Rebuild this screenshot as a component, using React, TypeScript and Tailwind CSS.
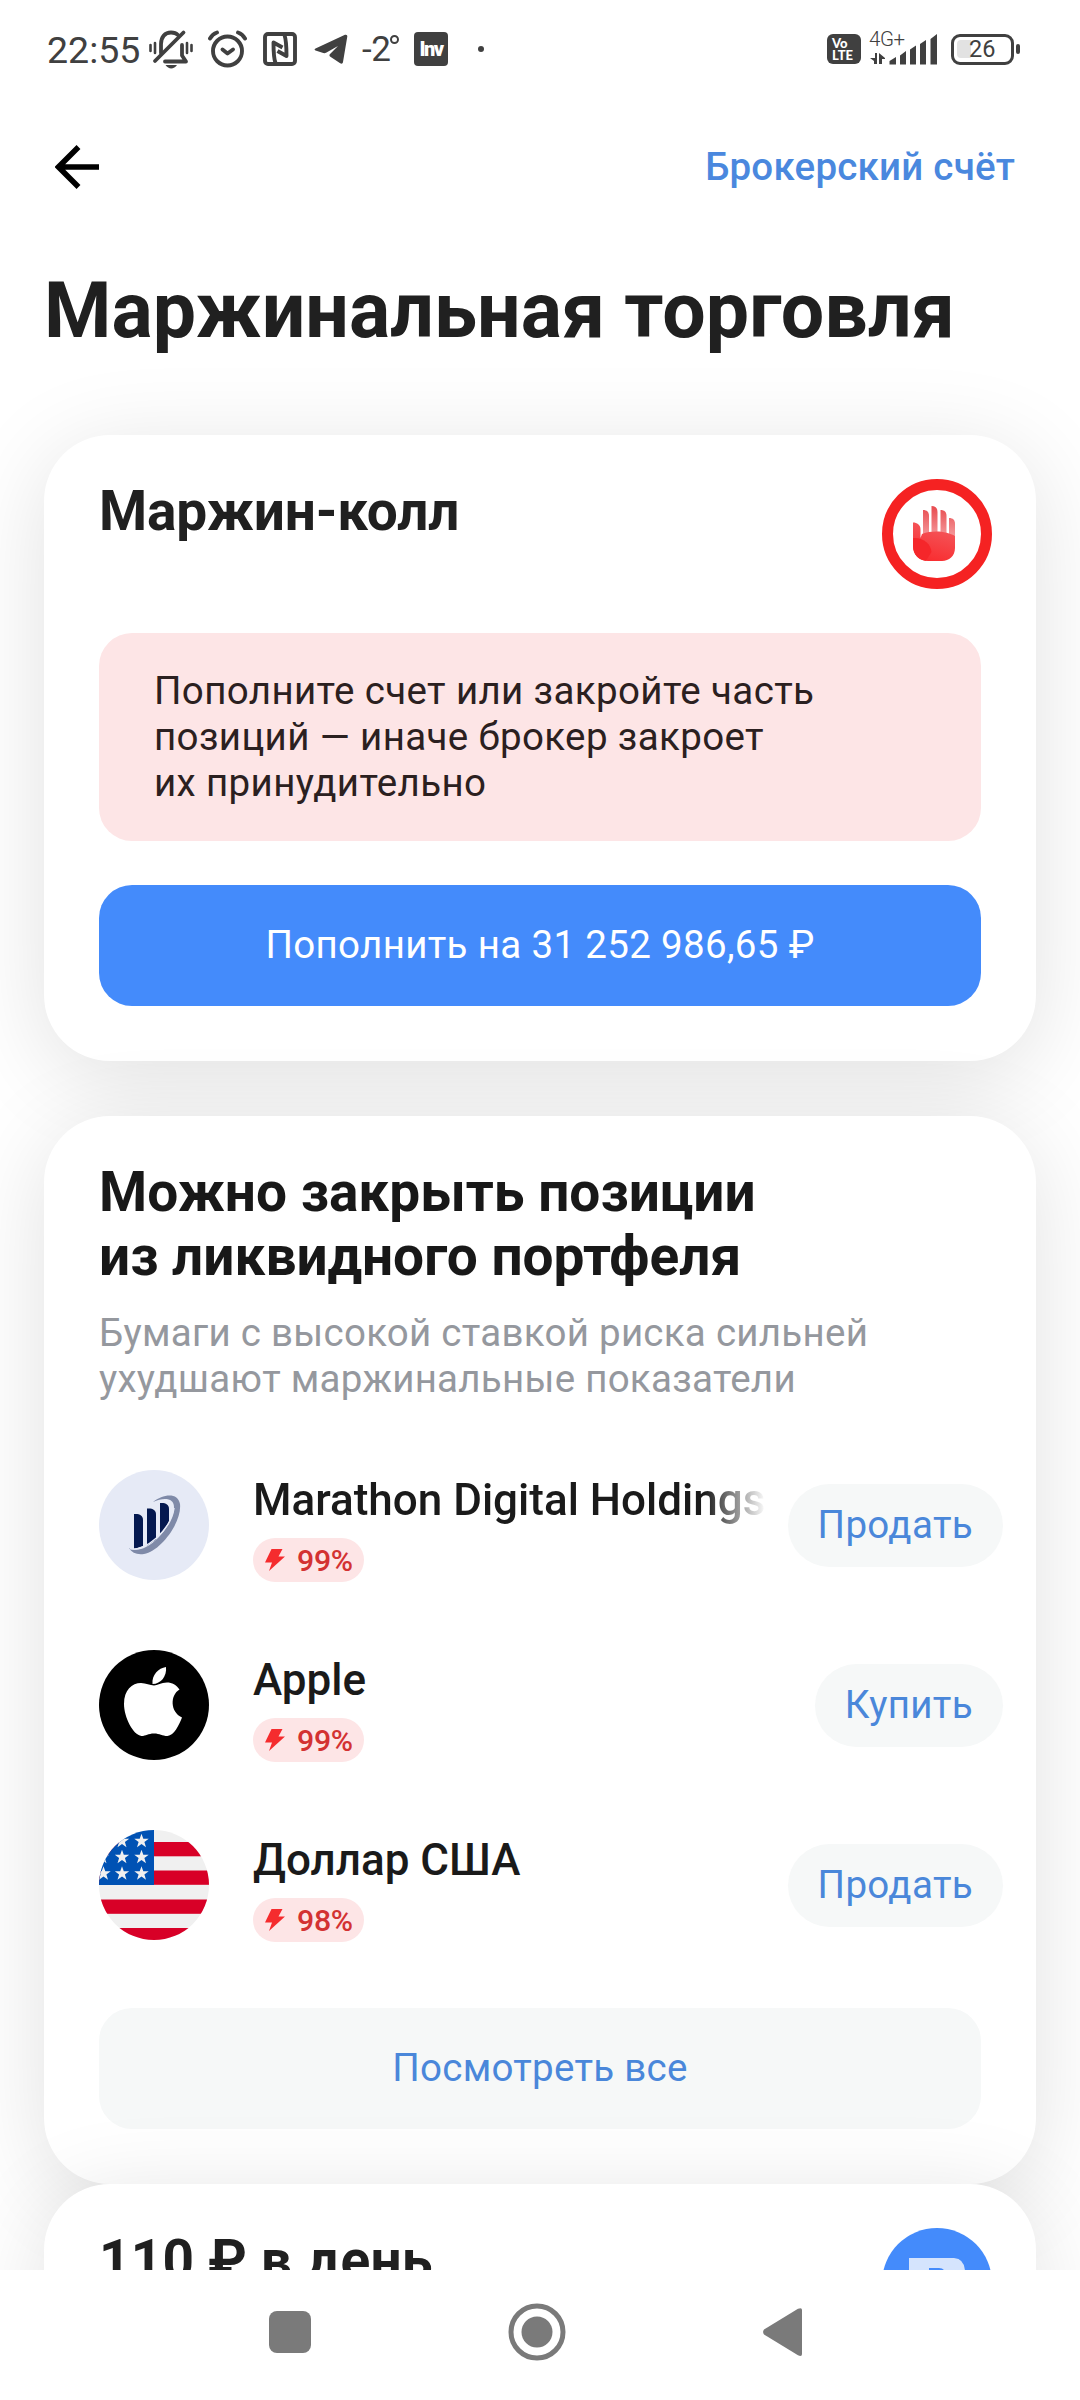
import React from 'react'

interface Position {
  name: string
  rate: string
  action: string
  logo: React.FC
}

const LOGO_SIZE = 'block h-[110px] w-[110px] shrink-0'

const MarathonLogo: React.FC = () => (
  <svg viewBox="0 0 110 110" className={LOGO_SIZE}>
    <circle cx="55" cy="55" r="55" fill="#e6eaf6" />
    <path d="M35 44c5-.5 9 1 9 6v26l-9 3z" fill="#04184f" />
    <path d="M48 38.500c5-.5 9 1 9 6v25l-9 6z" fill="#04184f" />
    <path d="M61 33c5-.5 9 1 9 6v12c-2 5-5 9-9 13z" fill="#04184f" />
    <path
      d="M54 32C64 24 79 22 81 34C83 52 62 81 45 84C38 85 33 83 30 78C36 81 41 80 47 77C61 70 75 50 75 37C75 28 65 27 54 32Z"
      fill="#7f8aa8"
    />
    <path d="M31 78.500C45 83 72 60 75 38" fill="none" stroke="#e6eaf6" strokeWidth="1.500" />
  </svg>
)

const AppleLogo: React.FC = () => (
  <svg viewBox="0 0 110 110" className={LOGO_SIZE}>
    <circle cx="55" cy="55" r="55" fill="#000" />
    <path
      d="M80.500 39.500C71 45 71 62 83 67.500C80 75 75 85.500 68.500 86C63 86 61 83.500 55 83.500C49 83.500 47 86 42.500 86C34 85 25 67 25 54C25 40 33 33 42 33C47 33 51 35.500 55 35.500C58.500 35.500 62 32.500 68 32.500C73 32.500 77.500 35 80.500 39.500Z"
      fill="#fff"
    />
    <path d="M67 17C68 26 62 34 53.500 34C52.500 25 59.500 18 67 17Z" fill="#fff" />
  </svg>
)

const STARS = [
  [4.500, 11], [23, 11], [42.500, 11],
  [3, 27], [23, 27], [42.500, 27],
  [4.500, 43.500], [23, 43.500], [42.500, 43.500],
]

const DollarLogo: React.FC = () => (
  <svg viewBox="0 0 110 110" className={LOGO_SIZE}>
    <clipPath id="flag">
      <circle cx="55" cy="55" r="55" />
    </clipPath>
    <g clipPath="url(#flag)">
      <rect width="110" height="110" fill="#f0f0f0" />
      {[12, 40.500, 69.500, 98].map((y) => (
        <rect key={y} y={y} width="110" height="14.300" fill="#d80027" />
      ))}
      <rect width="55" height="55" fill="#0052b4" />
      {STARS.map(([x, y]) => (
        <path
          key={`${x}-${y}`}
          transform={`translate(${x} ${y})`}
          d="M0-7.200 1.800-2.300H7.200L2.900.9 4.500 6.200 0 3-4.500 6.200-2.900.9-7.200-2.300H-1.800Z"
          fill="#f0f0f0"
        />
      ))}
    </g>
  </svg>
)

const positions: Position[] = [
  { name: 'Marathon Digital Holdings', rate: '99%', action: 'Продать', logo: MarathonLogo },
  { name: 'Apple', rate: '99%', action: 'Купить', logo: AppleLogo },
  { name: 'Доллар США', rate: '98%', action: 'Продать', logo: DollarLogo },
]

const StatusBar: React.FC = () => (
  <header className="flex h-[98px] shrink-0 items-center pr-[60px] pl-[47px] text-[#404040]">
    <span className="w-[102px] pt-1 text-[37.500px] leading-none">22:55</span>
    {/* Muted bell */}
    <svg viewBox="0 0 44 40" className="h-10 w-11" fill="none" stroke="currentColor" strokeWidth="3.800" strokeLinecap="round">
      <path d="M12 24V15C12 8 16 3.500 22 3.500C25 3.500 27.500 4.500 29 6" />
      <path d="M16 32.500H37L33 26.500V16" strokeLinejoin="round" />
      <path d="M6 32 34.500 3.500" />
      <path d="M1.500 16v6M6 14v10M38 14v10M42.500 16v6" strokeWidth="2.600" />
      <path d="M16.500 36h11.500c-3 4.500-8.500 4.500-11.500 0z" fill="currentColor" stroke="none" />
    </svg>
    {/* Alarm */}
    <svg viewBox="0 0 40 40" className="ml-[14px] h-10 w-10" fill="none" stroke="currentColor" strokeWidth="3.900" strokeLinecap="round">
      <circle cx="20.500" cy="22" r="14.500" />
      <path d="m15.500 20.500 5 4 5.500-4" strokeLinejoin="round" />
      <path d="M3 9.500Q5.500 5 10 3.500M31 3.500Q35.500 5 38 9.500" />
    </svg>
    {/* NFC */}
    <svg viewBox="0 0 34 34" className="ml-[16px] h-[34px] w-[34px]" fill="none" stroke="currentColor" strokeWidth="3.900">
      <rect x="2" y="2" width="30" height="30" rx="3" />
      <path d="M12.500 31C10.500 26 10.500 18 10.500 10.500L19.500 15.500M21.500 3C23.500 9 23.500 17 23.500 24L14.500 19" strokeLinejoin="round" />
    </svg>
    <svg viewBox="0 0 34 30" className="ml-[17px] h-[30px] w-[34px]" fill="currentColor">
      <path d="M1.500 14.500 31 .8c1.500-.5 2.500.3 2.300 1.800L29 28c-.3 1.800-1.500 2-2.800 1.200L16 22.500c-1-1-.5-2 .3-2.700L24 12l-11.500 6.500c-1.500.8-2.500.8-4 .3L1.500 16.500C.3 16 .3 15 1.500 14.500Z" />
    </svg>
    <span className="ml-[14px] flex w-[52px] items-start text-[35px] leading-none">
      <span className="w-[27px] tracking-[-0.500px]">-2</span>
      <span className="mt-[3px] ml-[1px] h-[9px] w-[9px] rounded-full border-2 border-[#404040]" />
    </span>
    <span className="flex h-[34px] w-[34px] items-center justify-center rounded bg-[#404040] text-[20px] font-black tracking-[-1.500px] text-white">
      Inv
    </span>
    <span className="ml-[30px] h-1.5 w-1.5 rounded-full bg-[#404040]" />

    <div className="ml-auto flex items-center">
      <span className="flex h-[30px] w-[34px] flex-col justify-center rounded-md bg-[#404040] pl-[5px] font-['Lato',sans-serif] text-[13px] leading-[12px] font-black text-white">
        <span>Vo</span>
        <span>LTE</span>
      </span>
      <div className="ml-2 h-[34px] w-[68px]">
        <svg viewBox="0 0 68 34" className="block overflow-visible" fill="currentColor">
          <text x="0" y="14" fontSize="20.500" fontWeight="300" letterSpacing="-0.400">4G+</text>
          <path d="M6 21h2v11H5v-3L1 26h5zM10 21l6 5v1h-3v5h-3z" />
          <path d="M20.500 29 27 25v7.500h-6.500zM31 23.500 37 19v13.500h-6zM41 17.500 47 13.500v19h-6zM51 12 57 8v24.500h-6zM61.500 7 68 2v30.500h-6.500z" />
        </svg>
      </div>
      <div className="ml-[14px] flex h-[31px] w-[63px] items-center rounded-[9px] border-[3px] border-[#404040] pl-[3px]">
        <span className="h-[18px] w-[14px] shrink-0 rounded-l bg-[#e2e2e2]" />
        <span className="-ml-[2px] pt-0.5 text-[23.500px] leading-none">26</span>
      </div>
      <span className="ml-0.5 h-[10px] w-1 rounded-sm bg-[#404040]" />
    </div>
  </header>
)

const StopHand: React.FC = () => (
  <svg viewBox="0 0 110 110" className="block h-[110px] w-[110px] shrink-0">
    <defs>
      <linearGradient id="fingers" x1="0" y1="0" x2="0" y2="1">
        <stop offset="0" stopColor="#e84a4e" />
        <stop offset="1" stopColor="#f6a3a5" />
      </linearGradient>
      <linearGradient id="palm" x1="0" y1="1" x2="0.300" y2="0">
        <stop offset="0" stopColor="#f9282b" />
        <stop offset="1" stopColor="#f4565a" />
      </linearGradient>
    </defs>
    <circle cx="55" cy="55" r="49.500" fill="#fff" stroke="#f52222" strokeWidth="11" />
    <path d="M41 31c4 0 6 2 6 6v20h-6zM49.500 27c4 0 6 2 6 6v24h-6zM58.500 31c4 0 6 2 6 6v22h-6zM67 39c4 0 6 2 6 6v16h-6z" fill="url(#fingers)" />
    <path d="M40 55C52 50.500 66 53 73 57V69C73 77 67 82 60 82H46C38 82 31 76 31 67V43.500C35 43.500 38.500 46 38.500 50V59Z" fill="url(#palm)" />
    <path d="M31 59C41 58 49 65 49.500 73L44 81.800C37 81 31 76 31 67Z" fill="#f5262a" />
  </svg>
)

const Bolt: React.FC = () => (
  <svg viewBox="0 0 20 22" className="h-[22px] w-5" fill="#f52c2e">
    <path d="M6.500 0H17.500L13.500 7.500H20L4 22 7 13.500H0Z" />
  </svg>
)

const PositionRow: React.FC<{ position: Position }> = ({ position }) => (
  <li className="flex h-[110px] items-center">
    <position.logo />
    <div className="ml-11 min-w-0 flex-1 self-start pt-1">
      <div
        className={
          position.name.length > 20
            ? 'overflow-hidden bg-linear-to-r from-[#1a1a1a] from-88% to-transparent bg-clip-text text-[44px] leading-[52px] font-medium whitespace-nowrap text-transparent'
            : 'text-[44px] leading-[52px] font-medium whitespace-nowrap text-[#1a1a1a]'
        }
      >
        {position.name}
      </div>
      <div className="mt-3 flex h-11 w-[111px] items-center rounded-full bg-[#fde5e6] pl-3">
        <Bolt />
        <span className="ml-3 pt-0.5 text-[30.250px] leading-none font-medium tracking-[-0.300px] text-[#d33232]">
          {position.rate}
        </span>
      </div>
    </div>
    <button className="ml-[22px] h-[83px] shrink-0 rounded-full bg-[#f6f8f8] px-[30px] text-[38.500px] tracking-[0.350px] text-[#4a87da]">
      {position.action}
    </button>
  </li>
)

const App: React.FC = () => {
  return (
    <div className="flex h-[2400px] w-[1080px] flex-col overflow-hidden bg-white font-['Roboto',sans-serif]">
      <StatusBar />

      <div className="flex h-[138px] shrink-0 items-center justify-between pr-[65px] pl-[55px]">
        <svg viewBox="0 0 44 44" className="h-11 w-11" fill="none" stroke="#000" strokeWidth="5.500">
          <path d="M44 22H4M23.500 2 3.500 22 23.500 42" />
        </svg>
        <a className="text-[38.500px] font-medium tracking-[0.220px] text-[#4a88de]">Брокерский счёт</a>
      </div>

      <main className="flex min-h-0 flex-1 flex-col overflow-hidden px-11">
        <h1 className="mt-[30px] shrink-0 text-[77px] leading-[90px] font-bold tracking-[0.060px] text-[#202020]">
          Маржинальная торговля
        </h1>

        {/* Margin call */}
        <section className="mt-[79px] h-[626px] shrink-0 rounded-[66px] bg-white px-[55px] shadow-[0_16px_94px_rgba(0,0,0,0.12)]">
          <div className="-mr-[11px] flex h-[198px] items-start justify-between pt-11">
            <h2 className="text-[55px] leading-[64px] font-bold tracking-[-0.150px] text-[#202020]">Маржин-колл</h2>
            <StopHand />
          </div>
          <div className="h-[208px] rounded-[33px] bg-[#fde5e6] px-[55px] pt-[35px] text-[38.500px] leading-[46px] tracking-[0.370px] text-[#2b2020]">
            Пополните счет или закройте часть
            <br />
            позиций — иначе брокер закроет
            <br />
            их принудительно
          </div>
          <button className="mt-11 block h-[121px] w-full rounded-[33px] bg-[#448bfb] pb-0.5 text-[38.500px] tracking-[0.330px] text-white">
            Пополнить на 31 252 986,65 ₽
          </button>
        </section>

        {/* Positions to close */}
        <section className="mt-[55px] h-[1068px] shrink-0 rounded-[66px] bg-white px-[55px] pt-11 shadow-[0_16px_94px_rgba(0,0,0,0.12)]">
          <h2 className="text-[55px] leading-[64px] font-bold text-[#181818]">
            Можно закрыть позиции
            <br />
            из ликвидного портфеля
          </h2>
          <p className="mt-[22px] text-[38.500px] leading-[46px] tracking-[0.270px] text-[#95989e]">
            Бумаги с высокой ставкой риска сильней
            <br />
            ухудшают маржинальные показатели
          </p>
          <ul className="mt-[68px] -mr-[22px] flex flex-col gap-[70px]">
            {positions.map((position) => (
              <PositionRow key={position.name} position={position} />
            ))}
          </ul>
          <button className="mt-[68px] block h-[121px] w-full rounded-[33px] bg-[#f6f8f8] pb-0.5 text-[38.500px] tracking-[0.270px] text-[#4a87da]">
            Посмотреть все
          </button>
        </section>

        {/* Daily fee */}
        <section className="flex h-[300px] shrink-0 items-start justify-between rounded-[66px] bg-white pt-11 pr-11 pl-[55px] shadow-[0_16px_94px_rgba(0,0,0,0.12)]">
          <h2 className="text-[55px] leading-[64px] font-bold tracking-[0.150px] text-[#202020]">110 ₽ в день</h2>
          <svg viewBox="0 0 110 110" className="block h-[110px] w-[110px]">
            <circle cx="55" cy="55" r="55" fill="#448bfb" />
            <path d="M27 30H72Q83 31 83 44V80H27Z" fill="#d5e4fd" />
            <path d="M47 40h10q6 0 6 6v8H47z" fill="#448bfb" />
          </svg>
        </section>
      </main>

      <nav className="flex h-[130px] shrink-0 items-center pb-[6px] pl-[269px]">
        <span className="h-[42px] w-[42px] rounded-lg bg-[#7a7a7a]" />
        <svg viewBox="0 0 58 58" className="ml-[197px] h-[58px] w-[58px]">
          <circle cx="29" cy="29" r="26" fill="none" stroke="#7a7a7a" strokeWidth="5" />
          <circle cx="29" cy="29" r="15.500" fill="#7a7a7a" />
        </svg>
        <svg viewBox="0 0 39 48" className="ml-[197px] h-12 w-[39px]" fill="#7a7a7a">
          <path d="M1 21.500 35 .8Q39-1 39 2V46Q39 49 35 47.200L1 26.500Q-.8 24 1 21.500Z" />
        </svg>
      </nav>
    </div>
  )
}

export default App
